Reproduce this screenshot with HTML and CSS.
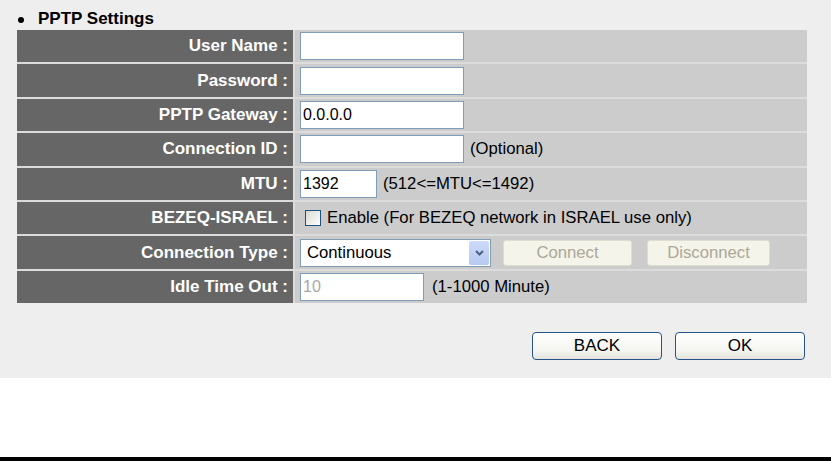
FILE: index.html
```html
<!DOCTYPE html>
<html lang="en">
<head>
    <meta charset="UTF-8">
    <title>PPTP Settings</title>
    <link rel="stylesheet" href="styles.css">
</head>
<body>

<div class="panel">
    <h2 class="title">PPTP Settings</h2>

    <div class="form-grid">
        <div class="label">User Name :</div>
        <div class="value"><input type="text" class="field"></div>

        <div class="label">Password :</div>
        <div class="value"><input type="password" class="field"></div>

        <div class="label">PPTP Gateway :</div>
        <div class="value"><input type="text" class="field" value="0.0.0.0"></div>

        <div class="label">Connection ID :</div>
        <div class="value"><input type="text" class="field"> <span>(Optional)</span></div>

        <div class="label">MTU :</div>
        <div class="value"><input type="text" class="field short" value="1392"> <span>(512&lt;=MTU&lt;=1492)</span></div>

        <div class="label">BEZEQ-ISRAEL :</div>
        <div class="value">
            <input type="checkbox" class="check" id="bezeq">
            <label for="bezeq">Enable (For BEZEQ network in ISRAEL use only)</label>
        </div>

        <div class="label">Connection Type :</div>
        <div class="value">
            <div class="select-box">
                <select>
                    <option>Continuous</option>
                    <option>Connect On Demand</option>
                    <option>Manual</option>
                </select>
                <span class="arrow">
                    <svg width="9" height="6" viewBox="0 0 9 6"><polyline points="1,1 4.5,4.5 8,1" fill="none" stroke="#4d6185" stroke-width="2"/></svg>
                </span>
            </div>
            <button class="btn-off connect" disabled>Connect</button>
            <button class="btn-off disconnect" disabled>Disconnect</button>
        </div>

        <div class="label">Idle Time Out :</div>
        <div class="value"><input type="text" class="field idle" value="10" disabled> <span class="hint">(1-1000 Minute)</span></div>
    </div>

    <div class="actions">
        <button class="btn">BACK</button>
        <button class="btn">OK</button>
    </div>
</div>

<div class="blank"></div>
<div class="bottom-bar"></div>

</body>
</html>
```

FILE: styles.css
```css
body {
    font-family: "Liberation Sans", Arial, sans-serif;
    margin: 0;
    padding: 0;
    background-color: #fff;
    overflow: hidden;
}

.panel {
    background-color: #eeeeee;
    height: 378px;
    box-sizing: border-box;
    padding: 9px 24px 0 17px;
}

.title {
    margin: 0 0 1px;
    font-size: 17px;
    line-height: 20px;
    font-weight: bold;
    color: #000;
    display: flex;
    align-items: center;
}

.title::before {
    content: "";
    width: 6px;
    height: 6px;
    border-radius: 50%;
    background: #000;
    margin: 1px 14px 0 1px;
}

.form-grid {
    display: grid;
    grid-template-columns: 276px 1fr;
    grid-auto-rows: 32.4px;
    gap: 2px;
    background-color: #dcdcdc;
}

.label {
    background-color: #666666;
    color: #fff;
    font-weight: bold;
    font-size: 17px;
    display: flex;
    align-items: center;
    justify-content: flex-end;
    padding-right: 5px;
}

.value {
    background-color: #cccccc;
    display: flex;
    align-items: center;
    gap: 6px;
    padding-left: 5px;
    font-size: 16.7px;
    color: #000;
}

.field {
    width: 164px;
    height: 28px;
    box-sizing: border-box;
    border: 1px solid #7f9db9;
    background: #fff;
    padding: 0 2px;
    margin: 0;
    font-family: "Liberation Sans", Arial, sans-serif;
    font-size: 16px;
    color: #000;
    outline: none;
}

.field.short {
    width: 77px;
}

.field.idle {
    width: 124px;
    color: #a8a8a8;
    background: #fff;
}

.hint {
    margin-left: 2px;
}

.check {
    appearance: none;
    width: 16px;
    height: 16px;
    box-sizing: border-box;
    margin: 0 0 0 5px;
    border: 1px solid #1c5180;
    background: linear-gradient(135deg, #d8d8d2, #ffffff);
}

.select-box {
    width: 191px;
    height: 28px;
    box-sizing: border-box;
    border: 1px solid #7f9db9;
    background: #fff;
    padding: 1px;
    display: flex;
    align-items: center;
}

.select-box select {
    appearance: none;
    flex: 1;
    height: 100%;
    border: 0;
    background: transparent;
    padding: 0 0 0 5px;
    font-family: "Liberation Sans", Arial, sans-serif;
    font-size: 16.7px;
    color: #000;
    outline: none;
}

.arrow {
    width: 20px;
    height: 24px;
    border-radius: 2px;
    background: linear-gradient(#cddbf9, #b6c9f3);
    display: flex;
    align-items: center;
    justify-content: center;
}

.btn-off {
    height: 26px;
    box-sizing: border-box;
    border: 1px solid #dfddd0;
    border-radius: 3px;
    background: #f5f4ea;
    color: #aca899;
    font-family: "Liberation Sans", Arial, sans-serif;
    font-size: 16.7px;
    padding: 0;
}

.btn-off.connect {
    width: 129px;
    margin-left: 6px;
}

.btn-off.disconnect {
    width: 123px;
    margin-left: 9px;
}

.actions {
    display: flex;
    justify-content: flex-end;
    gap: 13px;
    margin-top: 29px;
    padding-right: 2px;
}

.btn {
    width: 130px;
    height: 28px;
    box-sizing: border-box;
    border: 1px solid #24548a;
    border-radius: 4px;
    background: linear-gradient(#ffffff, #f4f4f0 70%, #e4e3dc);
    color: #000;
    font-family: "Liberation Sans", Arial, sans-serif;
    font-size: 17px;
    padding: 0;
}

.blank {
    height: 79px;
}

.bottom-bar {
    height: 4px;
    background: #000;
}
```
